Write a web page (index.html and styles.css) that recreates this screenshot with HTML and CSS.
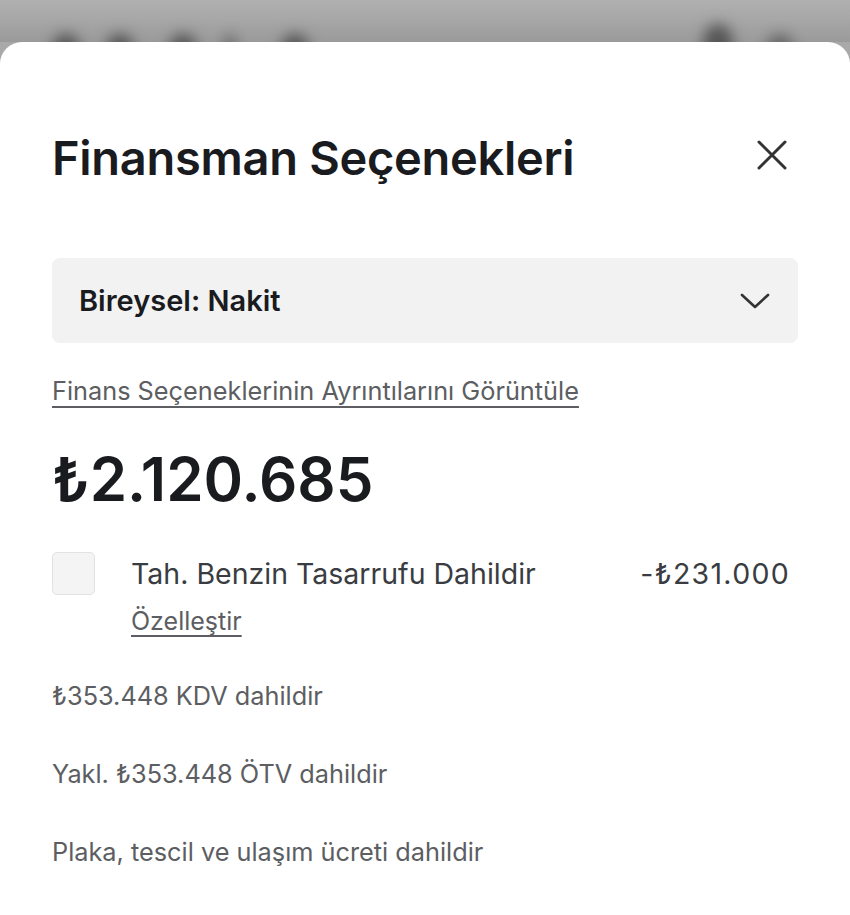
FILE: index.html
```html
<!DOCTYPE html>
<html lang="tr">
<head>
<meta charset="utf-8">
<link rel="stylesheet" href="styles.css">
</head>
<body>
<div class="backdrop">
  <div class="blobs">
    <span class="blob b1"></span><span class="blob b2"></span><span class="blob b3"></span><span class="blob b4 small"></span><span class="blob b5"></span>
  </div>
  <div class="blobs">
    <span class="blob big"></span><span class="blob b7"></span>
  </div>
</div>
<div class="modal">
  <div class="header">
    <h1 class="title">Finansman Seçenekleri</h1>
    <button class="close" aria-label="Kapat">
      <svg width="32" height="32" viewBox="0 0 32 32"><path d="M3 3 L29 29 M29 3 L3 29" stroke="#333" stroke-width="3" stroke-linecap="round" fill="none"/></svg>
    </button>
  </div>
  <div class="select">
    <span class="select-label">Bireysel: Nakit</span>
    <svg width="30" height="18" viewBox="0 0 30 18"><path d="M2 3 L15 15 L28 3" stroke="#333" stroke-width="2.6" stroke-linecap="round" stroke-linejoin="round" fill="none"/></svg>
  </div>
  <a class="details-link">Finans Seçeneklerinin Ayrıntılarını Görüntüle</a>
  <div class="price">₺2.120.685</div>
  <div class="option">
    <span class="checkbox"></span>
    <div class="option-text">
      <span class="option-label">Tah. Benzin Tasarrufu Dahildir</span>
      <a class="customize">Özelleştir</a>
    </div>
    <span class="option-value">-₺231.000</span>
  </div>
  <div class="notes">
    <p>₺353.448 KDV dahildir</p>
    <p>Yakl. ₺353.448 ÖTV dahildir</p>
    <p>Plaka, tescil ve ulaşım ücreti dahildir</p>
  </div>
</div>
</body>
</html>
```
FILE: styles.css
```css
* { box-sizing: border-box; }
html, body { margin: 0; padding: 0; }
body {
  width: 850px;
  height: 915px;
  overflow: hidden;
  background: #a9a9a9;
  font-family: Inter, "Noto Sans", "DejaVu Sans", sans-serif;
  color: #171a20;
}
.backdrop {
  height: 42px;
  display: flex;
  justify-content: space-between;
  align-items: flex-end;
  padding: 0 56px 0 52px;
  background: linear-gradient(#b0b0b0, #a6a6a6 50%, #9a9a9a);
}
.blobs { display: flex; align-items: flex-end; margin-bottom: -22px; }
.blob {
  width: 28px; height: 30px; border-radius: 50%;
  background: #555;
  filter: blur(7px);
}
.b2 { margin-left: 26px; }
.b3 { margin-left: 35px; }
.b4 { margin-left: 26px; }
.b5 { margin-left: 44px; }
.b7 { margin-left: 33px; opacity: 0.75; }
.blob.small { width: 14px; opacity: 0.7; }
.blob.big { width: 30px; height: 40px; }
.modal {
  background: #fff;
  border-radius: 22px 22px 0 0;
  height: 873px;
  padding: 0 52px;
  position: relative;
  z-index: 1;
}
.header {
  display: flex;
  justify-content: space-between;
  align-items: flex-start;
  padding-top: 88px;
}
.title {
  margin: 0;
  font-size: 47px;
  font-weight: 600;
  letter-spacing: -0.3px;
  line-height: 56px;
  color: #1a1b1f;
}
.close {
  background: none; border: 0; padding: 0;
  margin: 9px 10px 0 0;
  display: flex;
}
.select {
  margin-top: 72px;
  height: 85px;
  background: #f2f2f2;
  border-radius: 8px;
  display: flex;
  align-items: center;
  justify-content: space-between;
  padding: 0 28px 0 27px;
}
.select-label { font-size: 29px; font-weight: 600; color: #1a1b1f; }
.details-link {
  display: inline-block;
  margin-top: 33px;
  font-size: 25.3px;
  line-height: 30px;
  color: #5c5e62;
  text-decoration: underline;
  text-decoration-thickness: 2px;
  text-underline-offset: 6px;
}
.price {
  margin-top: 40px;
  font-size: 60px;
  font-weight: 600;
  line-height: 66px;
  color: #1a1b1f;
}
.option {
  margin-top: 40px;
  display: flex;
  align-items: flex-start;
}
.checkbox {
  width: 43px; height: 43px;
  background: #f4f4f4;
  border: 1.5px solid #e2e2e2;
  border-radius: 5px;
  flex: none;
}
.option-text {
  margin-left: 36px;
  display: flex; flex-direction: column;
  flex: 1;
}
.option-label { font-size: 28.5px; color: #393c41; line-height: 44px; }
.customize {
  align-self: flex-start;
  margin-top: 7px;
  font-size: 25px;
  line-height: 36px;
  color: #5c5e62;
  text-decoration: underline;
  text-decoration-thickness: 2px;
  text-underline-offset: 5px;
}
.option-value {
  font-size: 28.5px;
  letter-spacing: 1.3px;
  color: #393c41;
  line-height: 44px;
  margin-right: 8px;
}
.notes { margin-top: 42px; }
.notes p {
  margin: 0 0 48px;
  font-size: 25.3px;
  line-height: 30px;
  color: #5c5e62;
}
```
